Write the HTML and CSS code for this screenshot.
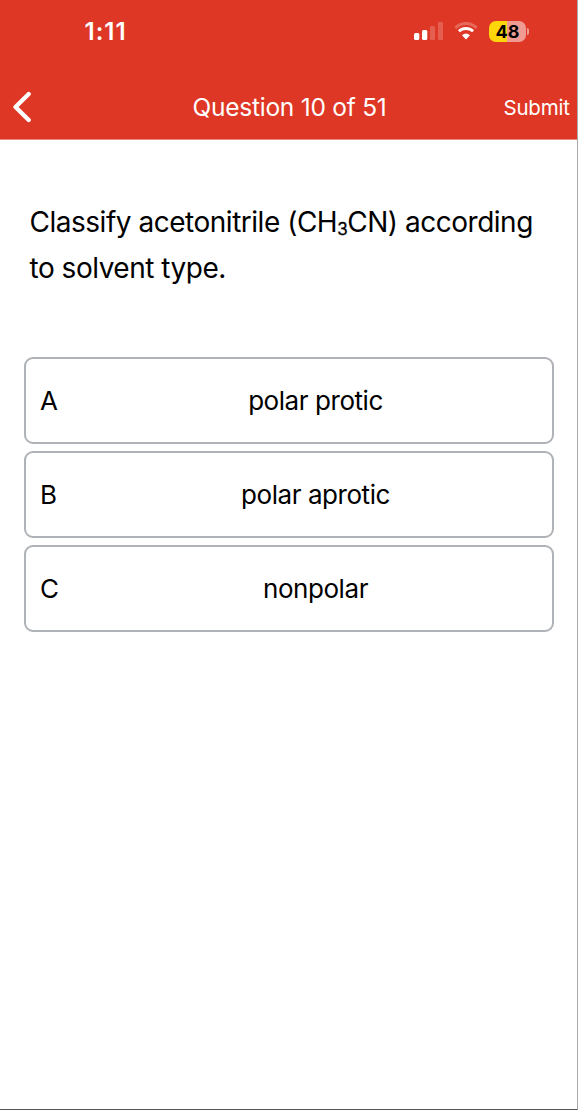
FILE: index.html
```html
<!DOCTYPE html>
<html lang="en">
<head>
<meta charset="utf-8">
<title>Question 10 of 51</title>
<link rel="stylesheet" href="styles.css">
</head>
<body>
<main class="screen">
  <header class="header">
    <div class="status">
      <span class="time">1:11</span>
      <div class="indicators">
        <svg class="signal" width="29" height="18" viewBox="0 0 29 18"><g fill="#fff"><rect x="0" y="11" width="5.300" height="7" rx="1.500"/><rect x="8" y="8" width="5.300" height="10" rx="1.500"/><g opacity=".2"><rect x="16" y="4" width="5" height="14" rx="1.300"/><rect x="24" y="0" width="5" height="18" rx="1.300"/></g></g></svg>
        <svg class="wifi" width="24" height="18" viewBox="0 0 24 18"><path d="M1.300 5.800C7.500.1 16.500.1 22.700 5.800" fill="none" stroke="#fff" stroke-opacity=".25" stroke-width="3"/><path d="M4.900 9.300C9 5.500 15 5.500 19.100 9.300" fill="none" stroke="#fff" stroke-width="2.900"/><path d="M8 13.300Q12 9.800 16 13.300L12 17.600Z" fill="#fff"/></svg>
        <span class="battery">48</span><i class="cap"></i>
      </div>
    </div>
    <nav class="nav">
      <svg class="back" width="20" height="32" viewBox="0 0 20 32"><path d="M16.700 3L3.500 16L16.700 29" fill="none" stroke="#fff" stroke-width="4.300" stroke-linecap="round" stroke-linejoin="round"/></svg>
      <h1 class="title">Question 10 of 51</h1>
      <span class="submit">Submit</span>
    </nav>
  </header>
  <section class="question">
    <p class="line">Classify acetonitrile (CH<sub class="sub">3</sub>CN) according</p>
    <p class="line">to solvent type.</p>
  </section>
  <section class="answers">
    <div class="answer"><span class="letter">A</span><span class="choice">polar protic</span></div>
    <div class="answer"><span class="letter">B</span><span class="choice">polar aprotic</span></div>
    <div class="answer"><span class="letter">C</span><span class="choice">nonpolar</span></div>
  </section>
</main>
</body>
</html>
```
FILE: styles.css
```css
* { box-sizing: border-box; }
body { margin: 0; font-family: Inter, sans-serif; color: #000; background: #fff; }
.screen { width: 578px; height: 1110px; border-right: 1px solid #aaa; border-bottom: 1px solid #555; overflow: hidden; }
.header { height: 140px; background: #df3725; color: #fff; border-bottom: 1px solid #eb8b80; }
.status { height: 76px; padding: 19px 48px 0 84.5px; display: flex; justify-content: space-between; align-items: flex-start; }
.time { font-size: 24px; line-height: 26px; font-weight: 600; letter-spacing: 1px; }
.indicators { display: flex; align-items: center; height: 24px; }
.wifi { margin-left: 11px; }
.battery { width: 37px; height: 21px; margin-left: 11px; border-radius: 7px; background: linear-gradient(90deg, #ffd60a 48%, #ef9b92 48%); color: #000; font-size: 18px; font-weight: 700; line-height: 21px; text-align: center; }
.cap { width: 2px; height: 7px; margin-left: 1px; border-radius: 0 3px 3px 0; background: #ef9b92; }
.nav { height: 62px; display: grid; grid-template-columns: 192.5px 1fr 73.5px; align-items: center; }
.back { margin-left: 12px; }
.title { margin: 0; font-size: 24.5px; line-height: 32px; font-weight: 400; letter-spacing: -.25px; white-space: nowrap; }
.submit { font-size: 20.5px; letter-spacing: -.2px; white-space: nowrap; }
.question { padding: 59px 0 0 29.5px; height: 217px; }
.line { margin: 0; font-size: 28px; line-height: 46px; letter-spacing: -.48px; white-space: nowrap; }
.sub { font-size: 17px; line-height: 0; vertical-align: -3px; -webkit-text-stroke: .3px #000; }
.answers { padding: 0 24px; display: flex; flex-direction: column; gap: 7px; }
.answer { width: 530px; height: 87px; border: 2px solid #afb2b6; border-radius: 9px; display: grid; grid-template-columns: 50px 1fr; align-items: center; padding: 0 11px 0 14px; font-size: 26px; letter-spacing: -.44px; }
.choice { text-align: center; }
```
